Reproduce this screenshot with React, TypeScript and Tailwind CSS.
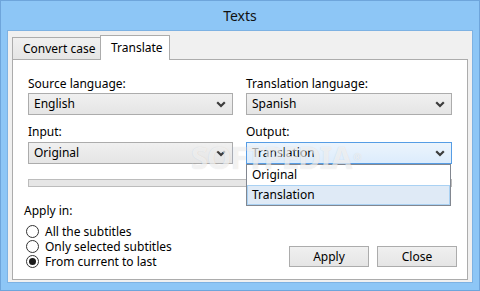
import { ReactNode } from "react"

function Chevron() {
  return (
    <svg width="10" height="7" viewBox="0 0 10 7" className="shrink-0">
      <path d="M1.2 1.2 L5 5 L8.8 1.2" fill="none" stroke="#3c3c3c" strokeWidth="2.2" />
    </svg>
  )
}

function Combo({ value, active, children }: { value: string; active?: boolean; children?: ReactNode }) {
  return (
    <div className="relative">
      <div
        className={
          active
            ? "flex h-[22px] items-center justify-between border border-[#569de5] bg-gradient-to-b from-[#ecf4fc] to-[#dcecfc] pl-[5px] pr-[6px]"
            : "flex h-[22px] items-center justify-between border border-[#acacac] bg-gradient-to-b from-[#f0f0f0] to-[#e5e5e5] pl-[5px] pr-[6px]"
        }
      >
        <span>{value}</span>
        <Chevron />
      </div>
      {children}
    </div>
  )
}

function Radio({ label, checked }: { label: string; checked?: boolean }) {
  return (
    <div className="flex h-[15px] items-center gap-[6px]">
      <span className="flex h-[13px] w-[13px] items-center justify-center rounded-full border border-[#333333] bg-white">
        {checked && <span className="h-[7px] w-[7px] rounded-full bg-[#1a1a1a]" />}
      </span>
      <span>{label}</span>
    </div>
  )
}

export default function App() {
  return (
    <div className="relative flex h-[291px] w-[480px] flex-col overflow-hidden border border-[#6ea5db] bg-[#8dc6f6] font-['Noto_Sans',sans-serif] text-[12px] leading-[16px] text-black">
      <div className="flex h-[29px] items-center justify-center text-[14px] text-[#111]">Texts</div>

      <div className="mx-[6px] mb-[7px] flex flex-1 flex-col border border-[#7db2e3] bg-[#f0f0f0] px-[4px] pt-[4px] pb-[2px]">
        {/* tabs */}
        <div className="flex h-[24px] items-end">
          <div className="flex h-[22px] w-[88px] items-center border-t border-l border-[#acacac] bg-gradient-to-b from-[#f0f0f0] to-[#e5e5e5] pl-[10px]">
            Convert case
          </div>
          <div className="relative z-10 -mb-px flex h-[25px] w-[70px] items-center border border-b-0 border-[#acacac] bg-white pl-[10px]">
            Translate
          </div>
        </div>

        {/* panel */}
        <div className="flex flex-1 flex-col border border-[#acacac] bg-white">
          <div className="grid grid-cols-[205px_206px] gap-x-[13px] pt-[16px] pl-[15px]">
            <div>
              <div className="h-[16px]">Source language:</div>
              <div className="mt-px">
                <Combo value="English" />
              </div>
            </div>
            <div>
              <div className="h-[16px]">Translation language:</div>
              <div className="mt-px">
                <Combo value="Spanish" />
              </div>
            </div>
            <div className="mt-[9px]">
              <div className="h-[16px]">Input:</div>
              <div className="mt-[2px]">
                <Combo value="Original" />
              </div>
            </div>
            <div className="relative z-20 mt-[9px]">
              <div className="h-[16px]">Output:</div>
              <div className="mt-[2px]">
                <Combo value="Translation" active>
                  <div className="absolute top-full left-0 w-[205px] border border-[#828790] bg-white">
                    <div className="flex h-[20px] items-center pl-[5px]">Original</div>
                    <div className="flex h-[20px] items-center border border-[#a9d1f3] bg-[#dfeaf6] pl-[4px]">
                      Translation
                    </div>
                  </div>
                </Combo>
              </div>
            </div>
          </div>

          <div className="mt-[15px] ml-[15px] h-[8px] w-[424px] border border-[#bcbcbc] bg-[#e6e6e6]" />

          <div className="flex flex-1 items-end justify-between pb-[10px]">
            <div className="pl-[11px]">
              <div className="h-[16px]">Apply in:</div>
              <div className="mt-[5px] pl-[2px]">
                <Radio label="All the subtitles" />
                <Radio label="Only selected subtitles" />
                <Radio label="From current to last" checked />
              </div>
            </div>
            <div className="mb-[2px] flex gap-[8px] pr-[10px]">
              <button className="flex h-[21px] w-[80px] items-center justify-center border border-[#acacac] bg-gradient-to-b from-[#f0f0f0] to-[#e5e5e5]">
                Apply
              </button>
              <button className="flex h-[21px] w-[80px] items-center justify-center border border-[#acacac] bg-gradient-to-b from-[#f0f0f0] to-[#e5e5e5]">
                Close
              </button>
            </div>
          </div>
        </div>
      </div>

      {/* watermark */}
      <div className="pointer-events-none absolute top-[139px] left-[190px] z-50 text-[31px] leading-[34px] font-bold tracking-[-1px] text-white/65 [text-shadow:0_0_1px_rgba(0,0,0,0.15)]">
        SOFTPEDIA<span className="ml-[2px] align-top text-[10px]">®</span>
      </div>
    </div>
  )
}
